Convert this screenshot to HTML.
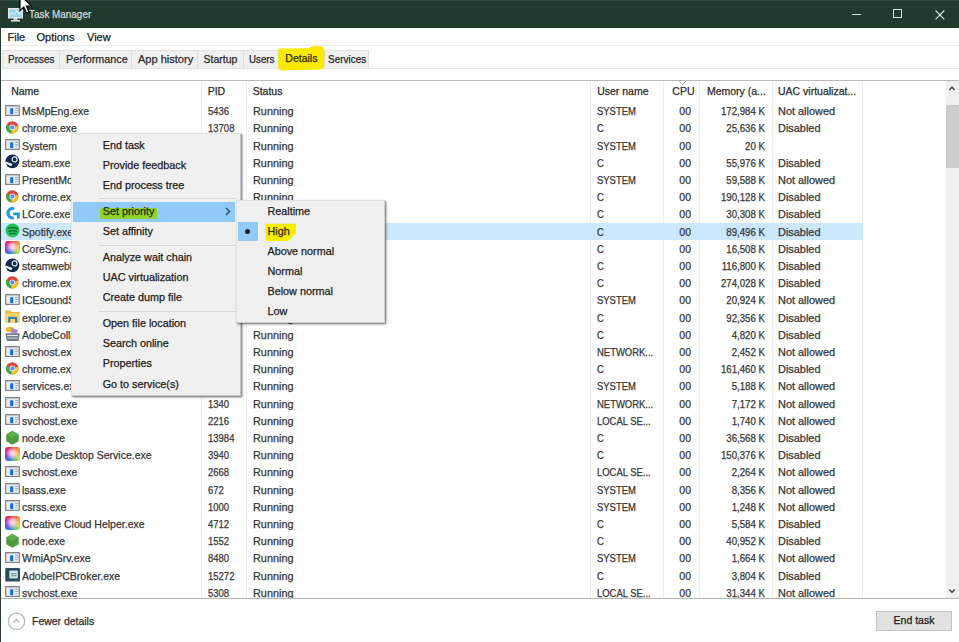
<!DOCTYPE html>
<html><head><meta charset="utf-8">
<style>
*{margin:0;padding:0;box-sizing:border-box}
html,body{width:959px;height:642px;overflow:hidden;background:#fff}
body{position:relative;font-family:"Liberation Sans",sans-serif;font-size:10.5px;color:#1a1a1a;-webkit-text-stroke:0.25px currentColor}
.abs{position:absolute}
#title{position:absolute;left:0;top:0;width:959px;height:27.5px;background:#213a2e;border-top:1px solid #2f4a3e}
#title .t{position:absolute;left:28.8px;top:6px;font-size:11px;color:#d0ddd6;line-height:14px;transform:scaleX(0.9);transform-origin:0 0}
#lborder{position:absolute;left:0;top:0;width:1px;height:642px;background:#2a3a32;z-index:50}
#menubar{position:absolute;left:0;top:27.5px;width:959px;height:18px;background:#fff;border-bottom:1px solid #ececec}
#menubar span{position:absolute;top:2px;font-size:11px;color:#222;line-height:14px}
#tabs{position:absolute;left:2px;top:50px;height:18.5px;width:367px;background:#f0f0f0;border:1px solid #e2e2e2}
.tsep{position:absolute;top:51px;width:1px;height:16.5px;background:#dcdcdc}
.tt{position:absolute;top:51.3px;font-size:10.5px;line-height:16px;color:#2a2a2a;white-space:nowrap}
#hdrline{position:absolute;left:1px;top:79.5px;width:958px;height:1.5px;background:#b9b9b9}
.hdr{position:absolute;top:82.5px;line-height:17.2px;color:#2b2b2b}
.vsep{position:absolute;top:81px;width:1px;height:518px;background:#eeeeee}
.row{position:absolute;left:1px;width:861.5px;height:17.2px;line-height:17.2px;color:#363636}
.row.sel{background:#cce8ff}
.row .ic{position:absolute;left:4px;top:0.5px;width:15px;height:15px}
.row .ic svg{display:block}
.row .c{position:absolute;top:0.9px;white-space:nowrap;overflow:hidden}
.nm{left:21px;width:180px}
.pid{left:207px;width:39px;transform:scaleX(0.905);transform-origin:0 0}
.st{left:251.7px;width:335px;transform:scaleX(1.035);transform-origin:0 0}
.us{left:596.2px;width:74px;transform:scaleX(0.9);transform-origin:0 0}
.cpu{left:663px;width:27px;text-align:right}
.mem{left:694px;width:70px;text-align:right;transform:scaleX(0.92);transform-origin:100% 0}
.uac{left:776.8px;width:84px;transform:scaleX(1.04);transform-origin:0 0}
#botline{position:absolute;left:1px;top:598.4px;width:958px;height:1px;background:#b5b5b5}
#sb{position:absolute;left:945.5px;top:81px;width:13.5px;height:517.5px;background:#f0f0f0}
#thumb{position:absolute;left:945.5px;top:105px;width:13.5px;height:63px;background:#cdcdcd}
#fewer{position:absolute;left:31.8px;top:613.8px;font-size:11px;line-height:14px;color:#2a2a2a;transform:scaleX(0.95);transform-origin:0 0}
#btn{position:absolute;left:876.3px;top:611px;width:75.4px;height:19.5px;background:#e1e1e1;border:1px solid #c2c2c2;font-size:10.5px;line-height:17.5px;text-align:center;color:#1a1a1a}
.menu{position:absolute;background:#f0f0f0;border:1px solid;border-color:#e2e2e2 #c4c4c4 #c4c4c4 #e2e2e2;box-shadow:1px 1px 1.5px rgba(0,0,0,0.45),2px 2px 3px rgba(0,0,0,0.15)}
.mt{position:absolute;height:20px;line-height:20px;color:#202020;font-size:10.8px;white-space:nowrap;margin-top:-0.6px}
.msep{position:absolute;height:1px;background:#d7d7d7}
</style></head><body>
<div id="title">
  <svg class="abs" style="left:8px;top:7px" width="15" height="14" viewBox="0 0 15 14">
    <rect x="0.5" y="0.5" width="14" height="9.5" fill="#d6dde0" stroke="#e3e8ea"/>
    <rect x="1.5" y="1.5" width="12" height="7.5" fill="#9fd6ef"/>
    <path d="M1.5 7 L4 4.5 L6 6.5 L9 3 L11 5.5 L13.5 3.5" stroke="#f2fbff" stroke-width="1" fill="none"/>
    <rect x="5.5" y="10" width="4" height="2" fill="#cfd8da"/><rect x="3" y="12" width="9" height="1.6" fill="#cfd8da"/>
  </svg>
  <span class="t">Task Manager</span>
  <div class="abs" style="left:852.2px;top:12.7px;width:9px;height:1px;background:#d5e0da"></div>
  <div class="abs" style="left:893px;top:7.8px;width:9.3px;height:9.3px;border:1px solid #d5e0da"></div>
  <svg class="abs" style="left:934.5px;top:8.8px" width="10" height="10" viewBox="0 0 10 10"><path d="M0.5 0.5 L9.3 9.3 M9.3 0.5 L0.5 9.3" stroke="#d5e0da" stroke-width="1.2"/></svg>
</div>
<svg class="abs" style="left:18.5px;top:-6px;z-index:60" width="14" height="21" viewBox="0 0 14 21">
  <path d="M1 0.8 L1 16.6 L4.8 13 L7.5 19 L10 18 L7.4 12.2 L12.4 12.2 Z" fill="#fff" stroke="#000" stroke-width="1.2" stroke-linejoin="miter"/>
</svg>
<div id="lborder"></div>
<div id="menubar">
  <span style="left:7.5px">File</span>
  <span style="left:36.5px">Options</span>
  <span style="left:87px">View</span>
</div>
<div id="tabs"></div>
<div class="tsep" style="left:59px"></div>
<div class="tsep" style="left:131px"></div>
<div class="tsep" style="left:197px"></div>
<div class="tsep" style="left:243px"></div>
<div class="tsep" style="left:278px"></div>
<div class="tsep" style="left:324px"></div>
<svg class="abs" style="left:270px;top:40px" width="60" height="35" viewBox="270 40 60 35"><path d="M278.5 48.5 L309 48.3 Q311 46 316 46 L323.3 46.8 Q324.5 50 324.3 56 L324 66 Q323.5 69.5 319 69.5 L282 70.4 Q278.3 70.4 278.2 66 Z" fill="#fbea00"/></svg>
<span class="tt" style="left:8.3px;transform:scaleX(0.95);transform-origin:0 0">Processes</span>
<span class="tt" style="left:65.5px;transform:scaleX(1.025);transform-origin:0 0">Performance</span>
<span class="tt" style="left:137.8px;transform:scaleX(1.05);transform-origin:0 0">App history</span>
<span class="tt" style="left:203.5px">Startup</span>
<span class="tt" style="left:248.8px;transform:scaleX(0.93);transform-origin:0 0">Users</span>
<span class="tt" style="left:285.3px;color:#2e2c00;margin-top:-1.5px">Details</span>
<span class="tt" style="left:327.5px;transform:scaleX(0.95);transform-origin:0 0">Services</span>
<div class="abs" style="left:369px;top:67.8px;width:590px;height:1px;background:#e6e6e6"></div>
<div id="hdrline"></div>
<svg class="abs" style="left:678px;top:80px" width="9" height="6" viewBox="0 0 9 6"><path d="M1 1 L4.5 4.5 L8 1" stroke="#a8a8a8" stroke-width="1" fill="none"/></svg>
<div class="vsep" style="left:201px"></div>
<div class="vsep" style="left:246px"></div>
<div class="vsep" style="left:590px"></div>
<div class="vsep" style="left:663px"></div>
<div class="vsep" style="left:699px"></div>
<div class="vsep" style="left:772px"></div>
<div class="vsep" style="left:862px"></div>
<span class="hdr" style="left:11.2px">Name</span>
<span class="hdr" style="left:207.7px">PID</span>
<span class="hdr" style="left:252.7px">Status</span>
<span class="hdr" style="left:597.2px">User name</span>
<span class="hdr" style="left:664px;width:30.5px;text-align:right">CPU</span>
<span class="hdr" style="left:706.9px">Memory (a...</span>
<span class="hdr" style="left:778px">UAC virtualizat...</span>
<div class="row" style="top:102.26px"><span class="ic"><svg width="15" height="15" viewBox="0 0 15 15"><rect x="0.75" y="2.6" width="13.5" height="9.8" fill="#f3f6f9" stroke="#858585" stroke-width="1.3"/><rect x="1.4" y="3.25" width="12.2" height="1" fill="#b9c3cc"/><rect x="4" y="4.6" width="5.2" height="7" fill="#cfe6fa"/><rect x="5.2" y="5.2" width="3" height="6" rx="0.8" fill="#1a6fcb"/><rect x="10" y="5.2" width="3.4" height="0.9" fill="#8ba0b4"/><rect x="10" y="7.2" width="3.4" height="0.9" fill="#8ba0b4"/><rect x="10" y="9.3" width="2.4" height="0.9" fill="#8ba0b4"/></svg></span><span class="c nm">MsMpEng.exe</span><span class="c pid">5436</span><span class="c st">Running</span><span class="c us">SYSTEM</span><span class="c cpu">00</span><span class="c mem">172,984 K</span><span class="c uac">Not allowed</span></div>
<div class="row" style="top:119.46px"><span class="ic"><svg width="15" height="15" viewBox="0 0 15 15"><circle cx="7.3" cy="7.4" r="6.2" fill="#d9463a"/><path d="M7.3 7.4 L13.3 5.6 A6.2 6.2 0 0 1 5.8 13.4 Z" fill="#f1c12e"/><path d="M7.3 7.4 L5.8 13.4 A6.2 6.2 0 0 1 1.5 5.0 Z" fill="#3ba757"/><circle cx="7.3" cy="7.4" r="2.8" fill="#f4f4f4"/><circle cx="7.3" cy="7.4" r="2.1" fill="#5a8fe0"/></svg></span><span class="c nm">chrome.exe</span><span class="c pid">13708</span><span class="c st">Running</span><span class="c us">C</span><span class="c cpu">00</span><span class="c mem">25,636 K</span><span class="c uac">Disabled</span></div>
<div class="row" style="top:136.66px"><span class="ic"><svg width="15" height="15" viewBox="0 0 15 15"><rect x="0.75" y="2.6" width="13.5" height="9.8" fill="#f3f6f9" stroke="#858585" stroke-width="1.3"/><rect x="1.4" y="3.25" width="12.2" height="1" fill="#b9c3cc"/><rect x="4" y="4.6" width="5.2" height="7" fill="#cfe6fa"/><rect x="5.2" y="5.2" width="3" height="6" rx="0.8" fill="#1a6fcb"/><rect x="10" y="5.2" width="3.4" height="0.9" fill="#8ba0b4"/><rect x="10" y="7.2" width="3.4" height="0.9" fill="#8ba0b4"/><rect x="10" y="9.3" width="2.4" height="0.9" fill="#8ba0b4"/></svg></span><span class="c nm">System</span><span class="c pid">4</span><span class="c st">Running</span><span class="c us">SYSTEM</span><span class="c cpu">00</span><span class="c mem">20 K</span><span class="c uac"></span></div>
<div class="row" style="top:153.86px"><span class="ic"><svg width="15" height="15" viewBox="0 0 15 15"><circle cx="7.4" cy="7.3" r="6.9" fill="#16284a"/><circle cx="9.6" cy="5.4" r="2.5" fill="none" stroke="#dfe6ee" stroke-width="1.2"/><path d="M0.5 8.6 L5.5 10.6" stroke="#dfe6ee" stroke-width="2.2"/><circle cx="5.6" cy="10.6" r="1.5" fill="#dfe6ee"/></svg></span><span class="c nm">steam.exe</span><span class="c pid">9724</span><span class="c st">Running</span><span class="c us">C</span><span class="c cpu">00</span><span class="c mem">55,976 K</span><span class="c uac">Disabled</span></div>
<div class="row" style="top:171.06px"><span class="ic"><svg width="15" height="15" viewBox="0 0 15 15"><rect x="0.75" y="2.6" width="13.5" height="9.8" fill="#f3f6f9" stroke="#858585" stroke-width="1.3"/><rect x="1.4" y="3.25" width="12.2" height="1" fill="#b9c3cc"/><rect x="4" y="4.6" width="5.2" height="7" fill="#cfe6fa"/><rect x="5.2" y="5.2" width="3" height="6" rx="0.8" fill="#1a6fcb"/><rect x="10" y="5.2" width="3.4" height="0.9" fill="#8ba0b4"/><rect x="10" y="7.2" width="3.4" height="0.9" fill="#8ba0b4"/><rect x="10" y="9.3" width="2.4" height="0.9" fill="#8ba0b4"/></svg></span><span class="c nm">PresentMon.exe</span><span class="c pid">6208</span><span class="c st">Running</span><span class="c us">SYSTEM</span><span class="c cpu">00</span><span class="c mem">59,588 K</span><span class="c uac">Not allowed</span></div>
<div class="row" style="top:188.26px"><span class="ic"><svg width="15" height="15" viewBox="0 0 15 15"><circle cx="7.3" cy="7.4" r="6.2" fill="#d9463a"/><path d="M7.3 7.4 L13.3 5.6 A6.2 6.2 0 0 1 5.8 13.4 Z" fill="#f1c12e"/><path d="M7.3 7.4 L5.8 13.4 A6.2 6.2 0 0 1 1.5 5.0 Z" fill="#3ba757"/><circle cx="7.3" cy="7.4" r="2.8" fill="#f4f4f4"/><circle cx="7.3" cy="7.4" r="2.1" fill="#5a8fe0"/></svg></span><span class="c nm">chrome.exe</span><span class="c pid">11532</span><span class="c st">Running</span><span class="c us">C</span><span class="c cpu">00</span><span class="c mem">190,128 K</span><span class="c uac">Disabled</span></div>
<div class="row" style="top:205.46px"><span class="ic"><svg width="15" height="15" viewBox="0 0 15 15"><path d="M7.9 2.4 A4.8 4.8 0 0 0 7.6 12.0" fill="none" stroke="#1f9ad6" stroke-width="3.1" stroke-linecap="round"/><path d="M8.1 6.4 H14.8 V12.6 H12 V9.2 H8.1 Z" fill="#1f9ad6"/></svg></span><span class="c nm">LCore.exe</span><span class="c pid">10108</span><span class="c st">Running</span><span class="c us">C</span><span class="c cpu">00</span><span class="c mem">30,308 K</span><span class="c uac">Disabled</span></div>
<div class="row sel" style="top:222.66px"><span class="ic"><svg width="15" height="15" viewBox="0 0 15 15"><circle cx="7.5" cy="7.4" r="7" fill="#22c25a"/><path d="M3 5.4 Q7.5 3.9 12.5 5.6" stroke="#125c2a" stroke-width="1.3" fill="none" stroke-linecap="round"/><path d="M4 8.1 Q7.5 7 11.5 8.3" stroke="#125c2a" stroke-width="1.2" fill="none" stroke-linecap="round"/><path d="M4.5 10.6 Q7.5 9.8 10.5 10.8" stroke="#125c2a" stroke-width="1" fill="none" stroke-linecap="round"/></svg></span><span class="c nm">Spotify.exe</span><span class="c pid">14556</span><span class="c st">Running</span><span class="c us">C</span><span class="c cpu">00</span><span class="c mem">89,496 K</span><span class="c uac">Disabled</span></div>
<div class="row" style="top:239.86px"><span class="ic"><div style="width:14.6px;height:13.5px;margin-top:0.6px;border-radius:3px;background:radial-gradient(ellipse at 50% 45%,rgba(255,240,250,0.95) 0,rgba(250,200,235,0.75) 30%,rgba(255,255,255,0) 62%),conic-gradient(from -20deg,#d8203a,#ef6a2a 50deg,#f3b838 100deg,#c4de46 140deg,#6cc48a 180deg,#3a7ee0 220deg,#7a4ee0 270deg,#d82a9a 320deg,#d8203a)"></div></span><span class="c nm">CoreSync.exe</span><span class="c pid">12644</span><span class="c st">Running</span><span class="c us">C</span><span class="c cpu">00</span><span class="c mem">16,508 K</span><span class="c uac">Disabled</span></div>
<div class="row" style="top:257.06px"><span class="ic"><svg width="15" height="15" viewBox="0 0 15 15"><circle cx="7.4" cy="7.3" r="6.9" fill="#16284a"/><circle cx="9.6" cy="5.4" r="2.5" fill="none" stroke="#dfe6ee" stroke-width="1.2"/><path d="M0.5 8.6 L5.5 10.6" stroke="#dfe6ee" stroke-width="2.2"/><circle cx="5.6" cy="10.6" r="1.5" fill="#dfe6ee"/></svg></span><span class="c nm">steamwebhelper.exe</span><span class="c pid">8672</span><span class="c st">Running</span><span class="c us">C</span><span class="c cpu">00</span><span class="c mem">116,800 K</span><span class="c uac">Disabled</span></div>
<div class="row" style="top:274.26px"><span class="ic"><svg width="15" height="15" viewBox="0 0 15 15"><circle cx="7.3" cy="7.4" r="6.2" fill="#d9463a"/><path d="M7.3 7.4 L13.3 5.6 A6.2 6.2 0 0 1 5.8 13.4 Z" fill="#f1c12e"/><path d="M7.3 7.4 L5.8 13.4 A6.2 6.2 0 0 1 1.5 5.0 Z" fill="#3ba757"/><circle cx="7.3" cy="7.4" r="2.8" fill="#f4f4f4"/><circle cx="7.3" cy="7.4" r="2.1" fill="#5a8fe0"/></svg></span><span class="c nm">chrome.exe</span><span class="c pid">13132</span><span class="c st">Running</span><span class="c us">C</span><span class="c cpu">00</span><span class="c mem">274,028 K</span><span class="c uac">Disabled</span></div>
<div class="row" style="top:291.46px"><span class="ic"><svg width="15" height="15" viewBox="0 0 15 15"><rect x="0.75" y="2.6" width="13.5" height="9.8" fill="#f3f6f9" stroke="#858585" stroke-width="1.3"/><rect x="1.4" y="3.25" width="12.2" height="1" fill="#b9c3cc"/><rect x="4" y="4.6" width="5.2" height="7" fill="#cfe6fa"/><rect x="5.2" y="5.2" width="3" height="6" rx="0.8" fill="#1a6fcb"/><rect x="10" y="5.2" width="3.4" height="0.9" fill="#8ba0b4"/><rect x="10" y="7.2" width="3.4" height="0.9" fill="#8ba0b4"/><rect x="10" y="9.3" width="2.4" height="0.9" fill="#8ba0b4"/></svg></span><span class="c nm">ICEsoundService64.exe</span><span class="c pid">3176</span><span class="c st">Running</span><span class="c us">SYSTEM</span><span class="c cpu">00</span><span class="c mem">20,924 K</span><span class="c uac">Not allowed</span></div>
<div class="row" style="top:308.66px"><span class="ic"><svg width="15" height="15" viewBox="0 0 15 15"><path d="M0.3 1.5 H5.5 L6.8 3 H14.8 V13.5 H0.3 Z" fill="#e9b949"/><rect x="0.3" y="4.5" width="14.5" height="9" fill="#f7d46b"/><path d="M3.2 13.4 V7.8 H12.2 V13.4 H10 V10 H5.4 V13.4 Z" fill="#3d7fa8"/></svg></span><span class="c nm">explorer.exe</span><span class="c pid">7536</span><span class="c st">Running</span><span class="c us">C</span><span class="c cpu">00</span><span class="c mem">92,356 K</span><span class="c uac">Disabled</span></div>
<div class="row" style="top:325.86px"><span class="ic"><svg width="15" height="15" viewBox="0 0 15 15"><ellipse cx="5" cy="3.5" rx="4.2" ry="2.8" fill="#f0b92a"/><path d="M6.5 2 L13 4 L11.5 8 L6 6.5 Z" fill="#a981dc"/><path d="M0.5 7.2 H14.8 L13.5 15 H1.8 Z" fill="#6f7c86"/><rect x="2" y="9" width="11" height="1.1" fill="#e9eef0"/><rect x="2.5" y="11.6" width="10" height="1.1" fill="#d0d6da"/></svg></span><span class="c nm">AdobeCollabSync.exe</span><span class="c pid">9048</span><span class="c st">Running</span><span class="c us">C</span><span class="c cpu">00</span><span class="c mem">4,820 K</span><span class="c uac">Disabled</span></div>
<div class="row" style="top:343.06px"><span class="ic"><svg width="15" height="15" viewBox="0 0 15 15"><rect x="0.75" y="2.6" width="13.5" height="9.8" fill="#f3f6f9" stroke="#858585" stroke-width="1.3"/><rect x="1.4" y="3.25" width="12.2" height="1" fill="#b9c3cc"/><rect x="4" y="4.6" width="5.2" height="7" fill="#cfe6fa"/><rect x="5.2" y="5.2" width="3" height="6" rx="0.8" fill="#1a6fcb"/><rect x="10" y="5.2" width="3.4" height="0.9" fill="#8ba0b4"/><rect x="10" y="7.2" width="3.4" height="0.9" fill="#8ba0b4"/><rect x="10" y="9.3" width="2.4" height="0.9" fill="#8ba0b4"/></svg></span><span class="c nm">svchost.exe</span><span class="c pid">1916</span><span class="c st">Running</span><span class="c us">NETWORK...</span><span class="c cpu">00</span><span class="c mem">2,452 K</span><span class="c uac">Not allowed</span></div>
<div class="row" style="top:360.26px"><span class="ic"><svg width="15" height="15" viewBox="0 0 15 15"><circle cx="7.3" cy="7.4" r="6.2" fill="#d9463a"/><path d="M7.3 7.4 L13.3 5.6 A6.2 6.2 0 0 1 5.8 13.4 Z" fill="#f1c12e"/><path d="M7.3 7.4 L5.8 13.4 A6.2 6.2 0 0 1 1.5 5.0 Z" fill="#3ba757"/><circle cx="7.3" cy="7.4" r="2.8" fill="#f4f4f4"/><circle cx="7.3" cy="7.4" r="2.1" fill="#5a8fe0"/></svg></span><span class="c nm">chrome.exe</span><span class="c pid">12408</span><span class="c st">Running</span><span class="c us">C</span><span class="c cpu">00</span><span class="c mem">161,460 K</span><span class="c uac">Disabled</span></div>
<div class="row" style="top:377.46px"><span class="ic"><svg width="15" height="15" viewBox="0 0 15 15"><rect x="0.75" y="2.6" width="13.5" height="9.8" fill="#f3f6f9" stroke="#858585" stroke-width="1.3"/><rect x="1.4" y="3.25" width="12.2" height="1" fill="#b9c3cc"/><rect x="4" y="4.6" width="5.2" height="7" fill="#cfe6fa"/><rect x="5.2" y="5.2" width="3" height="6" rx="0.8" fill="#1a6fcb"/><rect x="10" y="5.2" width="3.4" height="0.9" fill="#8ba0b4"/><rect x="10" y="7.2" width="3.4" height="0.9" fill="#8ba0b4"/><rect x="10" y="9.3" width="2.4" height="0.9" fill="#8ba0b4"/></svg></span><span class="c nm">services.exe</span><span class="c pid">748</span><span class="c st">Running</span><span class="c us">SYSTEM</span><span class="c cpu">00</span><span class="c mem">5,188 K</span><span class="c uac">Not allowed</span></div>
<div class="row" style="top:394.66px"><span class="ic"><svg width="15" height="15" viewBox="0 0 15 15"><rect x="0.75" y="2.6" width="13.5" height="9.8" fill="#f3f6f9" stroke="#858585" stroke-width="1.3"/><rect x="1.4" y="3.25" width="12.2" height="1" fill="#b9c3cc"/><rect x="4" y="4.6" width="5.2" height="7" fill="#cfe6fa"/><rect x="5.2" y="5.2" width="3" height="6" rx="0.8" fill="#1a6fcb"/><rect x="10" y="5.2" width="3.4" height="0.9" fill="#8ba0b4"/><rect x="10" y="7.2" width="3.4" height="0.9" fill="#8ba0b4"/><rect x="10" y="9.3" width="2.4" height="0.9" fill="#8ba0b4"/></svg></span><span class="c nm">svchost.exe</span><span class="c pid">1340</span><span class="c st">Running</span><span class="c us">NETWORK...</span><span class="c cpu">00</span><span class="c mem">7,172 K</span><span class="c uac">Not allowed</span></div>
<div class="row" style="top:411.86px"><span class="ic"><svg width="15" height="15" viewBox="0 0 15 15"><rect x="0.75" y="2.6" width="13.5" height="9.8" fill="#f3f6f9" stroke="#858585" stroke-width="1.3"/><rect x="1.4" y="3.25" width="12.2" height="1" fill="#b9c3cc"/><rect x="4" y="4.6" width="5.2" height="7" fill="#cfe6fa"/><rect x="5.2" y="5.2" width="3" height="6" rx="0.8" fill="#1a6fcb"/><rect x="10" y="5.2" width="3.4" height="0.9" fill="#8ba0b4"/><rect x="10" y="7.2" width="3.4" height="0.9" fill="#8ba0b4"/><rect x="10" y="9.3" width="2.4" height="0.9" fill="#8ba0b4"/></svg></span><span class="c nm">svchost.exe</span><span class="c pid">2216</span><span class="c st">Running</span><span class="c us">LOCAL SE...</span><span class="c cpu">00</span><span class="c mem">1,740 K</span><span class="c uac">Not allowed</span></div>
<div class="row" style="top:429.06px"><span class="ic"><svg width="15" height="15" viewBox="0 0 15 15"><path d="M7.3 0.8 L13.7 4.5 V11.2 L7.3 14.8 L1.2 11.2 V4.5 Z" fill="#4f9a3e"/><path d="M7.3 0.8 L13.7 4.5 L7.3 8 L1.2 4.5 Z" fill="#67b04f" opacity="0.7"/></svg></span><span class="c nm">node.exe</span><span class="c pid">13984</span><span class="c st">Running</span><span class="c us">C</span><span class="c cpu">00</span><span class="c mem">36,568 K</span><span class="c uac">Disabled</span></div>
<div class="row" style="top:446.26px"><span class="ic"><div style="width:14.6px;height:13.5px;margin-top:0.6px;border-radius:3px;background:radial-gradient(ellipse at 50% 45%,rgba(255,240,250,0.95) 0,rgba(250,200,235,0.75) 30%,rgba(255,255,255,0) 62%),conic-gradient(from -20deg,#d8203a,#ef6a2a 50deg,#f3b838 100deg,#c4de46 140deg,#6cc48a 180deg,#3a7ee0 220deg,#7a4ee0 270deg,#d82a9a 320deg,#d8203a)"></div></span><span class="c nm">Adobe Desktop Service.exe</span><span class="c pid">3940</span><span class="c st">Running</span><span class="c us">C</span><span class="c cpu">00</span><span class="c mem">150,376 K</span><span class="c uac">Disabled</span></div>
<div class="row" style="top:463.46px"><span class="ic"><svg width="15" height="15" viewBox="0 0 15 15"><rect x="0.75" y="2.6" width="13.5" height="9.8" fill="#f3f6f9" stroke="#858585" stroke-width="1.3"/><rect x="1.4" y="3.25" width="12.2" height="1" fill="#b9c3cc"/><rect x="4" y="4.6" width="5.2" height="7" fill="#cfe6fa"/><rect x="5.2" y="5.2" width="3" height="6" rx="0.8" fill="#1a6fcb"/><rect x="10" y="5.2" width="3.4" height="0.9" fill="#8ba0b4"/><rect x="10" y="7.2" width="3.4" height="0.9" fill="#8ba0b4"/><rect x="10" y="9.3" width="2.4" height="0.9" fill="#8ba0b4"/></svg></span><span class="c nm">svchost.exe</span><span class="c pid">2668</span><span class="c st">Running</span><span class="c us">LOCAL SE...</span><span class="c cpu">00</span><span class="c mem">2,264 K</span><span class="c uac">Not allowed</span></div>
<div class="row" style="top:480.66px"><span class="ic"><svg width="15" height="15" viewBox="0 0 15 15"><rect x="0.75" y="2.6" width="13.5" height="9.8" fill="#f3f6f9" stroke="#858585" stroke-width="1.3"/><rect x="1.4" y="3.25" width="12.2" height="1" fill="#b9c3cc"/><rect x="4" y="4.6" width="5.2" height="7" fill="#cfe6fa"/><rect x="5.2" y="5.2" width="3" height="6" rx="0.8" fill="#1a6fcb"/><rect x="10" y="5.2" width="3.4" height="0.9" fill="#8ba0b4"/><rect x="10" y="7.2" width="3.4" height="0.9" fill="#8ba0b4"/><rect x="10" y="9.3" width="2.4" height="0.9" fill="#8ba0b4"/></svg></span><span class="c nm">lsass.exe</span><span class="c pid">672</span><span class="c st">Running</span><span class="c us">SYSTEM</span><span class="c cpu">00</span><span class="c mem">8,356 K</span><span class="c uac">Not allowed</span></div>
<div class="row" style="top:497.86px"><span class="ic"><svg width="15" height="15" viewBox="0 0 15 15"><rect x="0.75" y="2.6" width="13.5" height="9.8" fill="#f3f6f9" stroke="#858585" stroke-width="1.3"/><rect x="1.4" y="3.25" width="12.2" height="1" fill="#b9c3cc"/><rect x="4" y="4.6" width="5.2" height="7" fill="#cfe6fa"/><rect x="5.2" y="5.2" width="3" height="6" rx="0.8" fill="#1a6fcb"/><rect x="10" y="5.2" width="3.4" height="0.9" fill="#8ba0b4"/><rect x="10" y="7.2" width="3.4" height="0.9" fill="#8ba0b4"/><rect x="10" y="9.3" width="2.4" height="0.9" fill="#8ba0b4"/></svg></span><span class="c nm">csrss.exe</span><span class="c pid">1000</span><span class="c st">Running</span><span class="c us">SYSTEM</span><span class="c cpu">00</span><span class="c mem">1,248 K</span><span class="c uac">Not allowed</span></div>
<div class="row" style="top:515.06px"><span class="ic"><div style="width:14.6px;height:13.5px;margin-top:0.6px;border-radius:3px;background:radial-gradient(ellipse at 50% 45%,rgba(255,240,250,0.95) 0,rgba(250,200,235,0.75) 30%,rgba(255,255,255,0) 62%),conic-gradient(from -20deg,#d8203a,#ef6a2a 50deg,#f3b838 100deg,#c4de46 140deg,#6cc48a 180deg,#3a7ee0 220deg,#7a4ee0 270deg,#d82a9a 320deg,#d8203a)"></div></span><span class="c nm">Creative Cloud Helper.exe</span><span class="c pid">4712</span><span class="c st">Running</span><span class="c us">C</span><span class="c cpu">00</span><span class="c mem">5,584 K</span><span class="c uac">Disabled</span></div>
<div class="row" style="top:532.26px"><span class="ic"><svg width="15" height="15" viewBox="0 0 15 15"><path d="M7.3 0.8 L13.7 4.5 V11.2 L7.3 14.8 L1.2 11.2 V4.5 Z" fill="#4f9a3e"/><path d="M7.3 0.8 L13.7 4.5 L7.3 8 L1.2 4.5 Z" fill="#67b04f" opacity="0.7"/></svg></span><span class="c nm">node.exe</span><span class="c pid">1552</span><span class="c st">Running</span><span class="c us">C</span><span class="c cpu">00</span><span class="c mem">40,952 K</span><span class="c uac">Disabled</span></div>
<div class="row" style="top:549.46px"><span class="ic"><svg width="15" height="15" viewBox="0 0 15 15"><rect x="0.75" y="2.6" width="13.5" height="9.8" fill="#f3f6f9" stroke="#858585" stroke-width="1.3"/><rect x="1.4" y="3.25" width="12.2" height="1" fill="#b9c3cc"/><rect x="4" y="4.6" width="5.2" height="7" fill="#cfe6fa"/><rect x="5.2" y="5.2" width="3" height="6" rx="0.8" fill="#1a6fcb"/><rect x="10" y="5.2" width="3.4" height="0.9" fill="#8ba0b4"/><rect x="10" y="7.2" width="3.4" height="0.9" fill="#8ba0b4"/><rect x="10" y="9.3" width="2.4" height="0.9" fill="#8ba0b4"/></svg></span><span class="c nm">WmiApSrv.exe</span><span class="c pid">8480</span><span class="c st">Running</span><span class="c us">SYSTEM</span><span class="c cpu">00</span><span class="c mem">1,664 K</span><span class="c uac">Not allowed</span></div>
<div class="row" style="top:566.66px"><span class="ic"><svg width="15" height="15" viewBox="0 0 15 15"><rect x="0.3" y="1.1" width="14.7" height="13.4" rx="0.8" fill="#274f5e"/><rect x="4.4" y="3.6" width="8.4" height="7.8" fill="#d9e8ec"/><rect x="6" y="6.2" width="5.6" height="1" fill="#3b8f7a"/><rect x="6" y="8.3" width="5.6" height="1" fill="#6d8790"/></svg></span><span class="c nm">AdobeIPCBroker.exe</span><span class="c pid">15272</span><span class="c st">Running</span><span class="c us">C</span><span class="c cpu">00</span><span class="c mem">3,804 K</span><span class="c uac">Disabled</span></div>
<div class="row" style="top:583.86px"><span class="ic"><svg width="15" height="15" viewBox="0 0 15 15"><rect x="0.75" y="2.6" width="13.5" height="9.8" fill="#f3f6f9" stroke="#858585" stroke-width="1.3"/><rect x="1.4" y="3.25" width="12.2" height="1" fill="#b9c3cc"/><rect x="4" y="4.6" width="5.2" height="7" fill="#cfe6fa"/><rect x="5.2" y="5.2" width="3" height="6" rx="0.8" fill="#1a6fcb"/><rect x="10" y="5.2" width="3.4" height="0.9" fill="#8ba0b4"/><rect x="10" y="7.2" width="3.4" height="0.9" fill="#8ba0b4"/><rect x="10" y="9.3" width="2.4" height="0.9" fill="#8ba0b4"/></svg></span><span class="c nm">svchost.exe</span><span class="c pid">5308</span><span class="c st">Running</span><span class="c us">LOCAL SE...</span><span class="c cpu">00</span><span class="c mem">31,344 K</span><span class="c uac">Not allowed</span></div>
<div id="sb"></div>
<div id="thumb"></div>
<svg class="abs" style="left:947px;top:85px" width="10" height="7" viewBox="0 0 10 7"><path d="M2.3 5 L5 2.2 L7.7 5" stroke="#505050" stroke-width="1.6" fill="none"/></svg>
<svg class="abs" style="left:947px;top:587.5px" width="10" height="7" viewBox="0 0 10 7"><path d="M2.3 1.5 L5 4.3 L7.7 1.5" stroke="#505050" stroke-width="1.6" fill="none"/></svg>
<div id="botline"></div>
<svg class="abs" style="left:7px;top:611.5px" width="19" height="19" viewBox="0 0 19 19"><circle cx="9.5" cy="9.3" r="8.2" fill="none" stroke="#b4b4b4" stroke-width="1.2"/><path d="M6.3 10.6 L9.5 7.3 L12.7 10.6" stroke="#a8a8a8" stroke-width="1.2" fill="none"/></svg>
<span id="fewer">Fewer details</span>
<div id="btn">End task</div>

<div class="menu" style="left:70.6px;top:132.8px;width:170.4px;height:263.2px"></div>
<div class="abs" style="left:73px;top:201.9px;width:161.8px;height:20px;background:#91c9f7"></div>
<div class="abs" style="left:100.2px;top:207.9px;width:56.8px;height:11.4px;border-radius:2px;background:#92d22a"></div>
<div class="msep" style="left:98.75px;width:137px;top:198.2px"></div>
<div class="msep" style="left:98.75px;width:137px;top:244.8px"></div>
<div class="msep" style="left:98.75px;width:137px;top:310.8px"></div>
<span class="mt" style="left:102.7px;top:135.7px">End task</span>
<span class="mt" style="left:102.7px;top:155.8px">Provide feedback</span>
<span class="mt" style="left:102.7px;top:175.8px">End process tree</span>
<span class="mt" style="left:102.7px;top:201.9px;color:#1a2a00">Set priority</span>
<span class="mt" style="left:102.7px;top:221.3px">Set affinity</span>
<span class="mt" style="left:102.7px;top:247.7px">Analyze wait chain</span>
<span class="mt" style="left:102.7px;top:267.8px">UAC virtualization</span>
<span class="mt" style="left:102.7px;top:287.7px">Create dump file</span>
<span class="mt" style="left:102.7px;top:313.9px">Open file location</span>
<span class="mt" style="left:102.7px;top:333.6px">Search online</span>
<span class="mt" style="left:102.7px;top:353.9px">Properties</span>
<span class="mt" style="left:102.7px;top:374.1px">Go to service(s)</span>
<svg class="abs" style="left:225px;top:207px" width="6" height="9" viewBox="0 0 6 9"><path d="M1 1 L4.5 4.5 L1 8" stroke="#34506a" stroke-width="1.5" fill="none"/></svg>
<div class="menu" style="left:236px;top:199.5px;width:148.8px;height:123.2px;border-color:#dedede #cfcfcf #cfcfcf #e4e4e4"></div>
<div class="abs" style="left:238px;top:222px;width:20px;height:19.3px;background:#91c9f7"></div>
<div class="abs" style="left:245.3px;top:229px;width:5.2px;height:5.2px;border-radius:50%;background:#222"></div>
<svg class="abs" style="left:260px;top:220px" width="40" height="25" viewBox="260 220 40 25"><path d="M265.3 223.8 L296 223.8 L296 233.5 L288 241 L267 241 Q265.3 241 265.3 238 Z" fill="#f8ec00"/></svg>
<span class="mt" style="left:267.5px;top:201.7px">Realtime</span>
<span class="mt" style="left:267.5px;top:221.3px;color:#2a2800">High</span>
<span class="mt" style="left:267.5px;top:241.4px">Above normal</span>
<span class="mt" style="left:267.5px;top:261.4px">Normal</span>
<span class="mt" style="left:267.5px;top:281.2px">Below normal</span>
<span class="mt" style="left:267.5px;top:301.1px">Low</span>

</body></html>
